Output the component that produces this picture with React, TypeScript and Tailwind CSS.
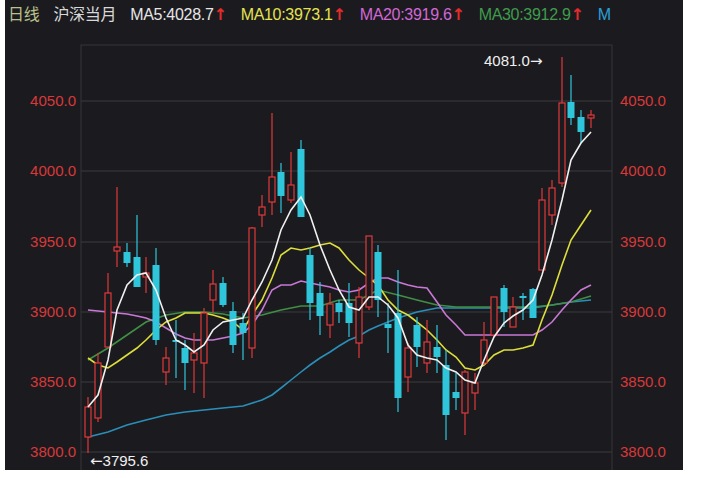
import React from "react";

type C = [number, number, number, number, number, "r" | "c"]; // x, bodyTop, bodyBot, hi, lo
const candles: C[] = [
  [88, 407, 437, 397, 453, "r"], [98, 363, 418, 353, 422, "r"], [108, 293, 347, 273, 347, "r"],
  [117, 247, 251, 187, 267, "r"], [127, 252, 263, 243, 267, "c"], [137, 257, 287, 215, 287, "c"],
  [146, 273, 277, 257, 293, "r"], [156, 265, 340, 248, 345, "c"], [166, 358, 372, 347, 385, "r"],
  [176, 340, 342, 320, 378, "c"], [185, 348, 363, 340, 390, "c"], [194, 353, 360, 333, 393, "r"],
  [204, 313, 363, 308, 398, "r"], [213, 284, 300, 270, 313, "r"], [223, 283, 305, 277, 307, "c"],
  [233, 311, 345, 302, 353, "c"], [243, 323, 333, 313, 360, "c"], [252, 228, 348, 227, 358, "r"],
  [262, 207, 215, 195, 227, "r"], [272, 177, 202, 113, 215, "r"], [281, 172, 196, 163, 213, "c"],
  [291, 185, 200, 152, 203, "r"], [301, 149, 217, 140, 217, "c"], [310, 255, 303, 248, 320, "c"],
  [320, 293, 316, 282, 335, "c"], [330, 304, 325, 293, 338, "r"], [339, 303, 312, 300, 323, "c"],
  [349, 303, 323, 283, 337, "c"], [359, 297, 343, 287, 358, "r"], [369, 236, 307, 236, 310, "r"],
  [378, 252, 300, 245, 317, "c"], [388, 324, 328, 303, 353, "c"], [398, 313, 398, 270, 412, "c"],
  [408, 348, 377, 343, 392, "r"], [417, 325, 347, 317, 367, "c"], [427, 342, 363, 320, 373, "r"],
  [437, 347, 357, 325, 373, "c"], [446, 365, 415, 350, 440, "c"], [456, 392, 398, 373, 410, "c"],
  [465, 372, 413, 370, 435, "r"], [475, 383, 393, 373, 410, "r"], [484, 340, 363, 322, 365, "r"],
  [494, 297, 335, 297, 337, "r"], [504, 288, 312, 285, 327, "c"], [513, 307, 327, 297, 327, "r"],
  [523, 296, 298, 293, 320, "c"], [533, 289, 318, 288, 318, "c"], [542, 200, 270, 188, 270, "r"],
  [552, 188, 215, 180, 225, "r"], [562, 103, 183, 57, 187, "r"], [571, 102, 118, 75, 125, "c"],
  [581, 117, 132, 110, 143, "c"], [591, 115, 118, 110, 128, "r"],
];

const ma5 = "88,407 98,395 108,360 117,310 127,285 137,275 146,273 156,290 166,318 176,340 185,345 194,352 204,345 213,330 223,322 233,320 243,318 252,300 262,282 272,260 281,230 291,210 301,197 310,215 320,245 330,270 339,290 349,307 359,310 369,297 378,297 388,305 398,318 408,345 417,355 427,358 437,360 446,368 456,372 465,380 475,383 484,360 494,337 504,323 513,316 523,310 533,300 542,275 552,240 562,200 571,160 581,143 591,132";
const ma10 = "88,358 98,365 108,368 117,362 127,355 137,348 146,340 156,330 166,322 176,318 185,313 194,313 204,313 213,315 223,318 233,322 243,330 252,315 262,300 272,278 281,255 291,248 301,250 310,248 320,245 330,243 339,248 349,260 359,270 369,278 378,285 388,300 398,310 408,315 417,322 427,330 437,340 446,350 456,357 465,368 475,370 484,365 494,355 504,350 513,350 523,348 533,345 542,320 552,295 562,265 571,240 581,225 591,210";
const ma20 = "88,310 98,311 108,312 117,313 127,314 137,316 146,318 156,322 166,328 176,334 185,338 194,340 204,340 213,340 223,338 233,336 243,333 252,325 262,310 272,290 281,285 291,285 301,281 310,283 320,285 330,287 339,290 349,292 359,290 369,283 378,278 388,278 398,282 408,285 417,287 427,288 437,302 446,315 456,325 465,335 475,335 484,335 494,335 504,335 513,335 523,335 533,335 542,330 552,322 562,310 571,300 581,290 591,285";
const ma30 = "88,360 108,348 127,335 146,322 166,315 185,312 204,312 223,314 243,318 262,315 281,310 301,306 320,306 339,300 359,300 378,290 398,295 417,300 437,305 456,307 475,307 494,307 513,307 533,307 552,305 571,302 591,296";
const ma60 = "88,437 108,432 127,425 146,420 166,415 185,412 204,410 223,408 243,406 262,400 272,395 281,388 291,380 301,372 310,365 320,358 330,352 339,346 349,340 359,336 369,330 378,326 388,322 398,318 417,312 437,308 456,308 475,308 494,308 513,308 533,308 552,305 571,302 591,300";

const levels: [number, string][] = [
  [101, "4050.0"], [171, "4000.0"], [242, "3950.0"], [312, "3900.0"], [382, "3850.0"], [452, "3800.0"],
];

const Arrow = () => (
  <span className="text-[#e52b2b] font-bold" style={{ fontFamily: '"DejaVu Sans", sans-serif' }}>↑</span>
);

export default function App() {
  const font = { fontFamily: '"Liberation Sans", "Noto Sans CJK SC", sans-serif' };
  const arrowFont = { fontFamily: '"DejaVu Sans", sans-serif' };
  return (
    <div className="w-[705px] h-[478px] bg-white" style={font}>
      <div className="ml-[5px] w-[678px] h-[470px] bg-[#1b1b1f] flex flex-col overflow-hidden">
        <div className="h-[30px] flex items-center gap-[14px] pl-[3px] text-[16px] tracking-[-0.3px] whitespace-nowrap">
          <span className="text-[#b9c08a]">日线</span>
          <span className="text-[#d8d8d8]">沪深当月</span>
          <span className="text-[#e6e6e6]">MA5:4028.7<Arrow /></span>
          <span className="text-[#e6e24f]">MA10:3973.1<Arrow /></span>
          <span className="text-[#d267d6]">MA20:3919.6<Arrow /></span>
          <span className="text-[#3f9b4c]">MA30:3912.9<Arrow /></span>
          <span className="text-[#2a9fd6]">M</span>
        </div>
        <svg width="678" height="440" viewBox="5 30 678 440" className="block">
          <rect x="81" y="45" width="531" height="430" fill="none" stroke="#34343a" strokeWidth="1" />
          {levels.map(([y, t]) => (
            <g key={t}>
              <line x1="81" x2="612" y1={y} y2={y} stroke="#3a3a40" strokeWidth="1" />
              <text x="76" y={y + 5} textAnchor="end" fill="#d93838" fontSize="15" style={font}>{t}</text>
              <text x="620" y={y + 5} fill="#d93838" fontSize="15" style={font}>{t}</text>
            </g>
          ))}
          <polyline points={ma60} fill="none" stroke="#2a8fb8" strokeWidth="1.6" />
          <polyline points={ma30} fill="none" stroke="#3f8f45" strokeWidth="1.6" />
          <polyline points={ma20} fill="none" stroke="#c978d6" strokeWidth="1.6" />
          <polyline points={ma10} fill="none" stroke="#dede3a" strokeWidth="1.6" />
          {candles.map(([x, t, b, h, l, c], i) => {
            const col = c === "r" ? "#e03a3a" : "#2fc6dc";
            return (
              <g key={i}>
                <line x1={x} x2={x} y1={h} y2={l} stroke={col} strokeWidth="1.2" />
                {c === "r" ? (
                  <rect x={x - 3} y={t} width="6" height={Math.max(b - t, 1)} fill="#1b1b1f" stroke={col} strokeWidth="1.2" />
                ) : (
                  <rect x={x - 3.5} y={t} width="7" height={Math.max(b - t, 1.5)} fill={col} />
                )}
              </g>
            );
          })}
          <polyline points={ma5} fill="none" stroke="#f0f0f0" strokeWidth="1.6" />
          <text x="484" y="66" fill="#f0f0f0" fontSize="15" style={font}>
            4081.0<tspan style={arrowFont}>→</tspan>
          </text>
          <text x="90" y="466" fill="#f0f0f0" fontSize="15" style={font}>
            <tspan style={arrowFont}>←</tspan>3795.6
          </text>
        </svg>
      </div>
    </div>
  );
}
